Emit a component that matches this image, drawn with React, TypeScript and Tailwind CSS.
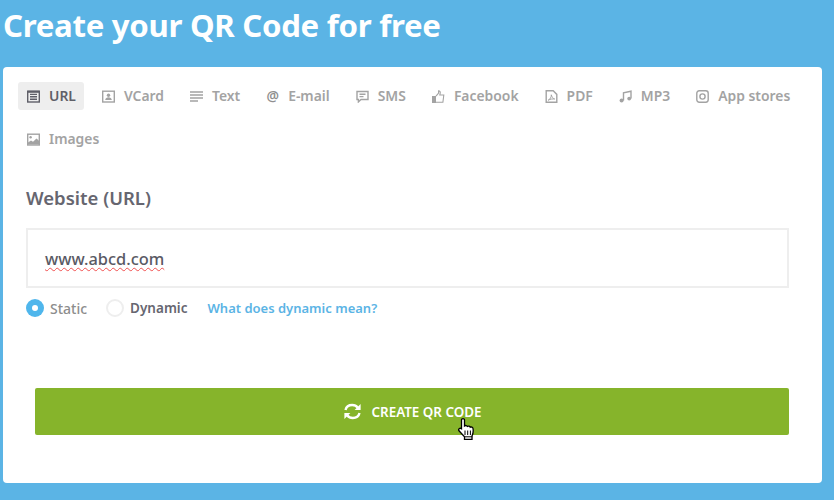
import type { ReactNode } from 'react'

const Icon = ({ children }: { children: ReactNode }) => (
  <svg width="13" height="13" viewBox="0 0 13 13" fill="none" stroke="currentColor" strokeWidth="1.4" className="shrink-0">
    {children}
  </svg>
)

const tabs: { label: string; icon: ReactNode; active?: boolean }[] = [
  {
    label: 'URL',
    active: true,
    icon: (
      <Icon>
        <rect x="0.7" y="1.2" width="11.6" height="10.8" />
        <path d="M3 4.4h7M3 6.8h7M3 9.2h7" />
        <path d="M0.7 1.8h11.6" strokeWidth="2" />
      </Icon>
    ),
  },
  {
    label: 'VCard',
    icon: (
      <Icon>
        <rect x="0.7" y="1.2" width="11.6" height="10.8" />
        <circle cx="6.5" cy="5.2" r="1.7" fill="currentColor" stroke="none" />
        <path d="M3.2 10c.3-2 1.6-2.8 3.3-2.8s3 .8 3.3 2.8z" fill="currentColor" stroke="none" />
      </Icon>
    ),
  },
  {
    label: 'Text',
    icon: (
      <Icon>
        <path d="M0 2h13M0 5h13M0 8h13M0 11h8" />
      </Icon>
    ),
  },
  {
    label: 'E-mail',
    icon: <span className="w-[13px] text-center text-[#8f8f8f]">@</span>,
  },
  {
    label: 'SMS',
    icon: (
      <Icon>
        <path d="M1 1.5h11v8H5l-2.6 2.4V9.5H1z" />
        <path d="M3.5 4.2h6M3.5 6.6h4" />
      </Icon>
    ),
  },
  {
    label: 'Facebook',
    icon: (
      <Icon>
        <rect x="0" y="6" width="4" height="7" fill="currentColor" stroke="none" />
        <path d="M4 6.2 6.6 3V.8c1.3 0 1.9 1 1.6 2.3L7.8 5h4l-.9 7.3H4" strokeWidth="1.1" />
      </Icon>
    ),
  },
  {
    label: 'PDF',
    icon: (
      <Icon>
        <path d="M1.2.8h7l3.6 3.6v7.9H1.2z" />
        <path d="M3.2 10.2c2-1 3.3-3.2 3.1-5.4.6 2.2 1.6 3.6 3.4 4.2-2.2-.2-4.4 0-6.5 1.2z" strokeWidth="1" />
      </Icon>
    ),
  },
  {
    label: 'MP3',
    icon: (
      <Icon>
        <path d="M4.5 10.5V2.8L12 1.2v7.3" />
        <circle cx="2.6" cy="10.6" r="2" fill="currentColor" stroke="none" />
        <circle cx="10.2" cy="8.6" r="1.9" fill="currentColor" stroke="none" />
      </Icon>
    ),
  },
  {
    label: 'App stores',
    icon: (
      <Icon>
        <rect x="0.8" y="0.8" width="11.4" height="11.4" rx="2.4" />
        <circle cx="6.5" cy="6.5" r="2.6" />
      </Icon>
    ),
  },
  {
    label: 'Images',
    icon: (
      <Icon>
        <rect x="0.7" y="1.2" width="11.6" height="10.8" />
        <circle cx="3.6" cy="4.2" r="1.2" fill="currentColor" stroke="none" />
        <path d="M1 11.5V9.5l3-2 2 1.3 3.5-3.3 2.7 2.5v3.5z" fill="currentColor" stroke="none" />
      </Icon>
    ),
  },
]

export default function App() {
  return (
    <div className="h-[500px] w-[834px] overflow-hidden bg-[#5bb4e5] pl-[3px] font-['Noto_Sans',sans-serif]">
      <h1 className="h-[67px] pt-[2px] text-[31.2px] leading-[46px] font-bold tracking-[-0.3px] text-white">
        Create your QR Code for free
      </h1>
      <div className="h-[416px] w-[819px] rounded-[4px] bg-white pt-[15px] pl-[15px]">
        <div className="flex w-[790px] flex-wrap gap-x-[9px] gap-y-[15px]">
          {tabs.map((t) => (
            <div
              key={t.label}
              className={
                t.active
                  ? 'flex h-[28px] items-center gap-[9px] rounded-[3px] bg-[#eeeeee] pr-[8px] pl-[9px] text-[13.9px] font-semibold text-[#5f5f68]'
                  : 'flex h-[28px] items-center gap-[9px] rounded-[3px] pr-[8px] pl-[9px] text-[13.9px] font-semibold text-[#a3a3a3]'
              }
            >
              {t.icon}
              <span className="pt-[1px]">{t.label}</span>
            </div>
          ))}
        </div>

        <div className="pl-[8px]">
          <h2 className="mt-[31px] text-[18.5px] leading-[28px] font-semibold text-[#666670]">Website (URL)</h2>
          <div className="mt-[16px] flex h-[60px] w-[763px] items-center border-2 border-[#eeeeee] pt-[2px] pl-[17px]">
            <span className="text-[16.4px] font-medium text-[#5a5a64] underline decoration-[#f05050] decoration-wavy decoration-1 underline-offset-2">
              www.abcd.com
            </span>
          </div>
          <div className="mt-[11px] flex h-[18px] items-center text-[14px]">
            <span className="flex h-[18px] w-[18px] items-center justify-center rounded-full bg-[#4fb6ec]">
              <span className="h-[6px] w-[6px] rounded-full bg-white" />
            </span>
            <span className="ml-[6px] font-medium text-[#8d8d8d]">Static</span>
            <span className="ml-[19px] h-[18px] w-[18px] rounded-full border-2 border-[#eeeeee]" />
            <span className="ml-[6px] text-[13.5px] font-semibold text-[#666670]">Dynamic</span>
            <span className="ml-[20px] pt-[1px] text-[13px] font-semibold text-[#5bb4e5]">What does dynamic mean?</span>
          </div>
          <button className="relative mt-[71px] ml-[9px] flex h-[47px] w-[754px] items-center justify-center gap-[10px] rounded-[2px] bg-[#86b42b] text-[13.4px] font-semibold text-white">
            <svg width="19" height="17" viewBox="0 0 19 17" fill="none" stroke="white" strokeWidth="2.4">
              <path d="M2.5 7C3.2 4 5.9 2 9.2 2c2.3 0 4.3 1 5.6 2.8" />
              <path d="M17.6 1v6h-6z" fill="white" stroke="none" />
              <path d="M16.5 10c-.7 3-3.4 5-6.7 5-2.3 0-4.3-1-5.6-2.8" />
              <path d="M1.4 16v-6h6z" fill="white" stroke="none" />
            </svg>
            <span className="pt-[1px]">CREATE QR CODE</span>
            <svg className="absolute top-[30px] left-[423px]" width="18" height="22" viewBox="0 0 18 22">
              <path
                d="M3.5 1.8c0-1.500 3-1.500 3 0V8c1-.8 2.500-.6 2.900.4 1-.6 2.500-.3 2.800.8 1-.5 2.600 0 2.800 1.300.5 2.800.1 5.300-1 7.500v3.500H6.500v-2.800L1 12.800c-1.100-1.700.8-3.300 2.500-2z"
                fill="white"
                stroke="black"
                strokeWidth="1.3"
              />
              <path d="M7 12.5v4.500M9.700 12.500v4.500M12.400 12.500v4.500M6.800 18.800h7.500" stroke="black" strokeWidth="1" fill="none" />
            </svg>
          </button>
        </div>
      </div>
    </div>
  )
}
